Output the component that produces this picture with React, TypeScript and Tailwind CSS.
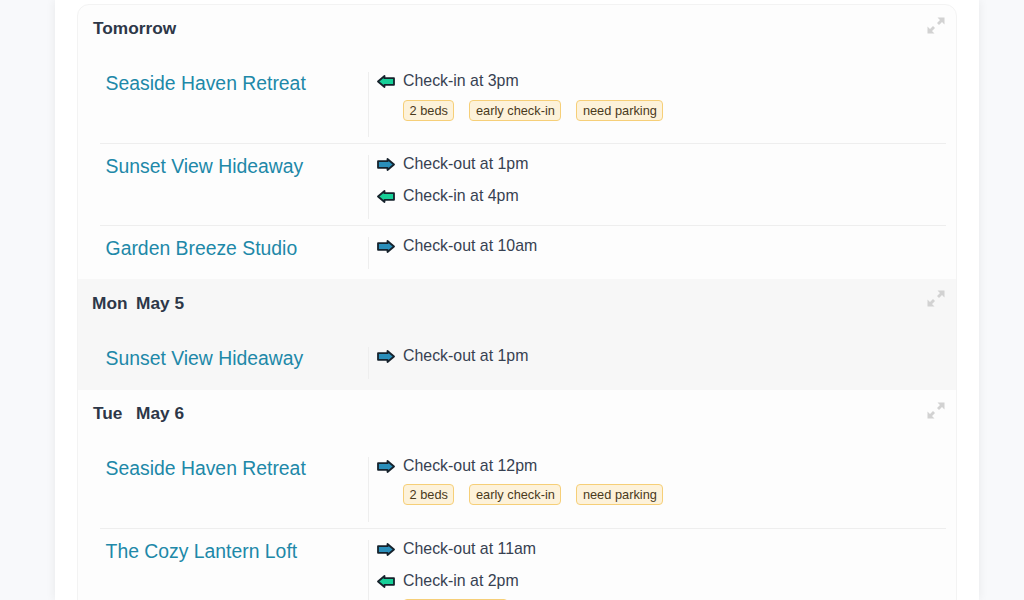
import type { ReactNode } from "react";

function Arrow({ dir }: { dir: "in" | "out" }) {
  const fill = dir === "in" ? "#17d098" : "#2a8fbb";
  return (
    <svg width="18" height="13" viewBox="0 0 18 13" className={`mt-[3px] shrink-0 ${dir === "in" ? "-scale-x-100" : ""}`}>
      <path d="M1 3.2H10.5V1L17 6.5L10.5 12V9.8H1Z" fill={fill} stroke="#16222c" strokeWidth="1.8" strokeLinejoin="round" />
    </svg>
  );
}

function Expand({ top }: { top: string }) {
  return (
    <svg width="18" height="17" viewBox="0 0 18 17" className={`absolute right-[11px] ${top}`} fill="#d2d2d2">
      <path d="M10.5 0.5H17.5V7.5L15 5L12 8L10 6L13 3Z" />
      <path d="M7.5 16.5H0.5V9.5L3 12L6 9L8 11L5 14Z" />
    </svg>
  );
}

function Tag({ children, wide }: { children: string; wide?: boolean }) {
  return (
    <span className={`h-[21px] rounded-[4px] border border-[#f6cf78] bg-[#fdf2da] px-[5.5px] text-[12.8px] leading-[19px] text-[#4a3a1c] ${wide ? "w-[105px]" : ""}`}>
      {children}
    </span>
  );
}

type Item = { dir: "in" | "out"; text: string };

function Row({ name, items, tags, divider, tight, wide }: { name: string; items: Item[]; tags?: string[]; divider?: boolean; tight?: boolean; wide?: boolean }) {
  return (
    <div className={`ml-[22px] mr-[10px] flex pt-[9px] ${divider ? "border-b border-[#eeeeee] pb-[6px]" : ""}`}>
      <div className="w-[268px] shrink-0 pl-[5.6px] text-[19.36px] leading-[27px] text-[#2088a8]">{name}</div>
      <div className="mt-[2px] flex-1 border-l border-[#eeeeee] pl-[8px]">
        {items.map((it) => (
          <div key={it.text} className="flex h-[32px] items-start gap-[8px] text-[15.9px] leading-[18px] text-[#374151]">
            <Arrow dir={it.dir} />
            <span>{it.text}</span>
          </div>
        ))}
        {tags && (
          <div className={`ml-[26px] flex gap-[15px] ${tight ? "-mt-[5px] pb-[17px]" : "-mt-[4px] pb-[16px]"}`}>
            {tags.map((t) => (
              <Tag key={t} wide={wide}>{t}</Tag>
            ))}
          </div>
        )}
      </div>
    </div>
  );
}

function Section({ day, date, children, shaded, top }: { day: string; date?: string; children: ReactNode; shaded?: boolean; top?: boolean }) {
  return (
    <section className={`relative ${shaded ? "bg-[#f7f7f7]" : ""} ${top ? "rounded-t-[12px]" : ""}`}>
      <h2 className={`flex text-[17.28px] font-bold leading-[22px] text-[#2d3748] ${shaded ? "h-[47px] pl-[14px] pt-[13px]" : "h-[46px] pl-[15px] pt-[12px]"}`}>
        <span className={shaded ? "w-[44px]" : "w-[43px]"}>{day}</span>
        {date && <span>{date}</span>}
      </h2>
      <Expand top={shaded ? "top-[11px]" : "top-[12px]"} />
      {children}
    </section>
  );
}

const TAGS = ["2 beds", "early check-in", "need parking"];

export default function App() {
  return (
    <div className="h-[600px] overflow-hidden bg-[#f8f9fb] font-['Liberation_Sans',Arial,sans-serif]">
      <div className="ml-[55px] mr-[45px] h-full bg-white pl-[22px] pr-[22px] pt-[4px] shadow-[0_0_10px_rgba(0,0,0,0.07)]">
        <div className="min-h-[700px] rounded-[12px] border border-[#f3f3f3] bg-[#fdfdfd]">
          <Section day="Tomorrow" top>
            <div className="pb-[10px] pt-[10px]">
              <Row name="Seaside Haven Retreat" items={[{ dir: "in", text: "Check-in at 3pm" }]} tags={TAGS} divider />
              <Row name="Sunset View Hideaway" items={[{ dir: "out", text: "Check-out at 1pm" }, { dir: "in", text: "Check-in at 4pm" }]} divider />
              <Row name="Garden Breeze Studio" items={[{ dir: "out", text: "Check-out at 10am" }]} />
            </div>
          </Section>
          <Section day="Mon" date="May 5" shaded>
            <div className="pb-[11px] pt-[10px]">
              <Row name="Sunset View Hideaway" items={[{ dir: "out", text: "Check-out at 1pm" }]} />
            </div>
          </Section>
          <Section day="Tue" date="May 6">
            <div className="pt-[10px]">
              <Row name="Seaside Haven Retreat" items={[{ dir: "out", text: "Check-out at 12pm" }]} tags={TAGS} divider tight />
              <Row name="The Cozy Lantern Loft" items={[{ dir: "out", text: "Check-out at 11am" }, { dir: "in", text: "Check-in at 2pm" }]} tags={["early check-out"]} tight wide />
            </div>
          </Section>
        </div>
      </div>
    </div>
  );
}
